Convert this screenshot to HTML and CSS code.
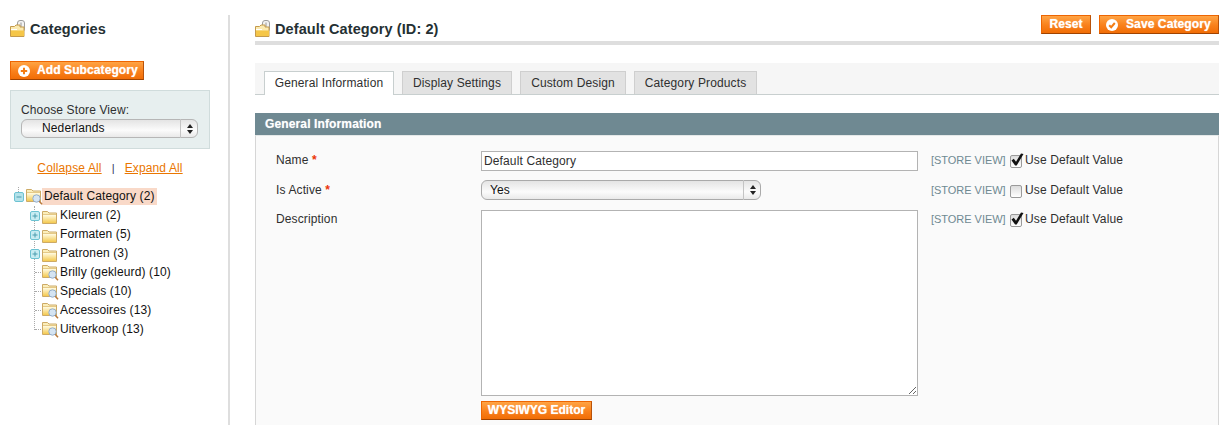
FILE: index.html
```html
<!DOCTYPE html>
<html lang="en">
<head>
<meta charset="utf-8">
<title>Default Category</title>
<link rel="stylesheet" href="styles.css">
</head>
<body>
<svg class="defs" width="0" height="0" aria-hidden="true">
  <defs>
    <linearGradient id="fold" x1="0" y1="0" x2="0" y2="1"><stop offset="0" stop-color="#fffbe2"/><stop offset="1" stop-color="#f4c94f"/></linearGradient>
    <symbol id="folder" viewBox="0 0 15 14">
      <path d="M.5 13.500V1.500h5l1.500 1.500h7.500v10.500z" fill="#fbeeba" stroke="#cdaa66"/>
      <path d="M1 5h13v8H1z" fill="url(#fold)"/>
      <path d="M1 4.500h13" stroke="#e5c987"/>
    </symbol>
    <symbol id="leaf" viewBox="0 0 17 17">
      <path d="M.5 13.500V1.500h5l1.500 1.500h7.500v10.500z" fill="#fbeeba" stroke="#cdaa66"/>
      <path d="M1 5h13v8H1z" fill="url(#fold)"/>
      <path d="M1 4.500h13" stroke="#e5c987"/>
      <circle cx="10.500" cy="10.500" r="3.700" fill="#d5e4f2" stroke="#94aeca"/>
      <path d="M13.300 13.300l2.700 2.900" stroke="#b9793c" stroke-width="1.600"/>
    </symbol>
    <symbol id="head" viewBox="0 0 15 17">
      <rect x="7.500" y=".5" width="7" height="11" rx="2.500" fill="#f2f2f2" stroke="#9c9c9c"/>
      <rect x="10" y="2.500" width="2" height="7" fill="#c4c4c4"/>
      <path d="M.5 16.500V6.500h4l1.500-1.500h4v2h4v9.500z" fill="#fbeab0" stroke="#c49a4c"/>
      <path d="M1 10.500h13V16H1z" fill="#f5c648"/>
      <path d="M1 9.500h6" stroke="#fff"/>
    </symbol>
    <symbol id="plus" viewBox="0 0 10 10">
      <rect x=".5" y=".5" width="9" height="9" rx="1.500" fill="#c8ecf2" stroke="#6cc2d2"/>
      <path d="M2.500 5h5M5 2.500v5" stroke="#4a9cae"/>
    </symbol>
    <symbol id="minus" viewBox="0 0 10 10">
      <rect x=".5" y=".5" width="9" height="9" rx="1.500" fill="#b4e2ea" stroke="#6cc2d2"/>
      <path d="M2.500 5h5" stroke="#4a9cae"/>
    </symbol>
    <symbol id="tick" viewBox="0 0 14 14">
      <path d="M1.500 7.500l2.300-1.700 2.200 3 5-8.300 2.500.5-6.800 11.500h-1.600z" fill="#111"/>
    </symbol>
  </defs>
</svg>
<div class="page">
  <aside class="side">
    <h3 class="side-title"><svg class="ico-head"><use href="#head"/></svg>Categories</h3>
    <button class="btn btn-add" type="button">
      <svg class="btn-ico" viewBox="0 0 12 12"><circle cx="6" cy="6" r="6" fill="#fff"/><path d="M6 2.800v6.400M2.800 6h6.400" stroke="#f47d14" stroke-width="2"/></svg>Add Subcategory
    </button>
    <div class="store-box">
      <label class="store-label" for="store">Choose Store View:</label>
      <div class="sel sel-store">
        <select id="store"><option>Nederlands</option></select>
        <span class="sel-arrows"><i class="up"></i><i class="down"></i></span>
      </div>
    </div>
    <div class="tree-links"><a href="#">Collapse All</a><span class="sep">|</span><a href="#">Expand All</a></div>
    <div class="tree">
      <div class="row root"><svg class="box"><use href="#minus"/></svg><svg class="ic-leaf"><use href="#leaf"/></svg><span class="hl">Default Category (2)</span></div>
      <div class="kids">
        <div class="row"><svg class="box"><use href="#plus"/></svg><svg class="ic-folder"><use href="#folder"/></svg><span>Kleuren (2)</span></div>
        <div class="row"><svg class="box"><use href="#plus"/></svg><svg class="ic-folder"><use href="#folder"/></svg><span>Formaten (5)</span></div>
        <div class="row"><svg class="box"><use href="#plus"/></svg><svg class="ic-folder"><use href="#folder"/></svg><span>Patronen (3)</span></div>
        <div class="row"><i class="dash"></i><svg class="ic-leaf"><use href="#leaf"/></svg><span>Brilly (gekleurd) (10)</span></div>
        <div class="row"><i class="dash"></i><svg class="ic-leaf"><use href="#leaf"/></svg><span>Specials (10)</span></div>
        <div class="row"><i class="dash"></i><svg class="ic-leaf"><use href="#leaf"/></svg><span>Accessoires (13)</span></div>
        <div class="row"><i class="dash"></i><svg class="ic-leaf"><use href="#leaf"/></svg><span>Uitverkoop (13)</span></div>
      </div>
    </div>
  </aside>
  <main class="main">
    <header class="head">
      <h3 class="main-title"><svg class="ico-head"><use href="#head"/></svg>Default Category (ID: 2)</h3>
      <div class="actions">
        <button class="btn btn-reset" type="button">Reset</button>
        <button class="btn btn-save" type="button">
          <svg class="btn-ico" viewBox="0 0 12 12"><circle cx="6" cy="6" r="6" fill="#fff"/><path d="M3.200 6.200l2 2 3.600-4.200" fill="none" stroke="#f47d14" stroke-width="2"/></svg>Save Category
        </button>
      </div>
    </header>
    <nav class="tabs">
      <a class="tab tab-on" href="#">General Information</a>
      <a class="tab tab-2" href="#">Display Settings</a>
      <a class="tab tab-3" href="#">Custom Design</a>
      <a class="tab tab-4" href="#">Category Products</a>
    </nav>
    <h4 class="sec-head">General Information</h4>
    <section class="sec-body">
      <div class="frow">
        <label class="lbl" for="f-name">Name <em>*</em></label>
        <input id="f-name" class="txt" type="text" value="Default Category">
        <div class="scope"><span class="sv">[STORE VIEW]</span><span class="chk"><svg><use href="#tick"/></svg></span><span>Use Default Value</span></div>
      </div>
      <div class="frow">
        <label class="lbl" for="f-act">Is Active <em>*</em></label>
        <div class="sel sel-act">
          <select id="f-act"><option>Yes</option></select>
          <span class="sel-arrows"><i class="up"></i><i class="down"></i></span>
        </div>
        <div class="scope"><span class="sv">[STORE VIEW]</span><span class="chk"></span><span>Use Default Value</span></div>
      </div>
      <div class="frow">
        <label class="lbl" for="f-desc">Description</label>
        <div class="area-wrap">
          <textarea id="f-desc" class="area"></textarea>
          <button class="btn btn-wys" type="button">WYSIWYG Editor</button>
        </div>
        <div class="scope"><span class="sv">[STORE VIEW]</span><span class="chk"><svg><use href="#tick"/></svg></span><span>Use Default Value</span></div>
      </div>
    </section>
  </main>
</div>
</body>
</html>
```
FILE: styles.css
```css
* { box-sizing: border-box; }
html, body { margin: 0; padding: 0; background: #fff; }
body { font: 12px/15px "Liberation Sans", Arial, sans-serif; color: #2f2f2f; letter-spacing: .13px; }
.defs { position: absolute; }
.page { display: flex; height: 425px; overflow: hidden; }

/* buttons */
.btn {
  display: flex; align-items: center; justify-content: center;
  height: 19px; padding: 0; margin: 0;
  font: bold 12px/15px "Liberation Sans", Arial, sans-serif; color: #fff; letter-spacing: .1px;
  background: linear-gradient(#ffa445, #f9801b 55%, #f16d06);
  border: 1px solid #ed6502; border-right-color: #b8520a; border-bottom-color: #a04300;
  text-shadow: 0 0 1px rgba(255,255,255,.8);
}
.btn-ico { width: 12px; height: 12px; flex: none; }

/* sidebar */
.side { width: 230px; flex: none; margin-top: 15px; padding: 0 0 0 10px; border-right: 2px solid #dedede; }
.side-title, .main-title {
  display: flex; align-items: center; margin: 0;
  font: bold 14.5px/18px "Liberation Sans", Arial, sans-serif; letter-spacing: .1px; color: #253033;
}
.side-title { height: 27px; }
.ico-head { width: 15px; height: 17px; margin-right: 5px; flex: none; }
.btn-add { width: 134px; margin-top: 19px; justify-content: flex-start; padding-left: 7px; }
.btn-add .btn-ico { margin-right: 7px; }
.store-box { width: 200px; height: 59px; margin-top: 10px; padding: 11px 10px 0; background: #e7efef; border: 1px solid #d0dcdc; }
.store-label { display: block; height: 17px; font-size: 12px; line-height: 17px; color: #2f2f2f; }
.sel { position: relative; height: 20px; }
.sel select {
  appearance: none; display: block; width: 100%; height: 100%; margin: 0; letter-spacing: .13px;
  border: 1px solid #b6b6b6; border-radius: 6px; color: #111;
  background: linear-gradient(#e4e4e4, #fbfbfb 60%, #e9e9e9);
  font: 12px/16px "Liberation Sans", Arial, sans-serif;
}
.sel-store { width: 177px; height: 19px; }
.sel-store select { padding: 0 0 2px 20px; }
.sel-act { width: 280px; }
.sel-act select { padding-left: 8px; border-color: #aaa; }
.sel-arrows {
  position: absolute; right: 0; top: 0; bottom: 0; width: 18px; pointer-events: none;
  display: flex; flex-direction: column; align-items: center; justify-content: center; gap: 2px;
  border-left: 1px solid #c4c4c4;
}
.sel-arrows i { width: 0; height: 0; border-left: 3px solid transparent; border-right: 3px solid transparent; }
.sel-arrows .up { border-bottom: 4px solid #222; }
.sel-arrows .down { border-top: 4px solid #222; }

.tree-links { display: flex; justify-content: center; width: 200px; margin-top: 11px; height: 16px; line-height: 16px; }
.tree-links a { color: #ea7601; text-decoration: underline; }
.sep { margin: 0 10px; color: #2f2f5f; font-size: 11px; }

.tree { margin-top: 11px; color: #111; position: relative; }
.tree::before { content: ""; position: absolute; left: 8px; top: 0; height: 5px; border-left: 1px dotted #aaa; }
.row { display: flex; align-items: center; height: 19px; }
.root { padding-left: 4px; }
.root .ic-leaf { margin-left: 2px; margin-right: -1px; }
.hl { background: #f9d9c8; height: 17px; line-height: 16px; padding: 0 2px; }
.box { width: 10px; height: 10px; flex: none; position: relative; }
.ic-folder { width: 15px; height: 14px; margin: 0 3px 0 2px; flex: none; position: relative; top: 1px; }
.ic-leaf { width: 17px; height: 17px; margin-right: 1px; flex: none; position: relative; }
.kids { position: relative; padding-left: 20px; }
.kids::before { content: ""; position: absolute; left: 24px; top: 0; height: 124px; border-left: 1px dotted #aaa; }
.dash { width: 12px; height: 0; flex: none; border-top: 1px dotted #aaa; position: relative; left: 5px; }

/* main */
.main { flex: 1; min-width: 0; padding: 15px 3px 0 25px; }
.head { display: flex; justify-content: space-between; align-items: flex-start; height: 30px; border-bottom: 4px solid #dedede; }
.main-title { height: 27px; }
.actions { display: flex; gap: 8px; }
.btn-reset { width: 50px; }
.btn-save { width: 120px; justify-content: flex-start; padding-left: 6px; }
.btn-save .btn-ico { margin-right: 8px; }

.tabs { display: flex; margin-top: 18px; height: 32px; padding: 8px 0 0 9px; background: #f6f6f6; border-bottom: 1px solid #c8cfcf; gap: 8px; }
.tab {
  display: block; height: 23px; line-height: 22px; text-align: center; color: #2f2f2f; text-decoration: none;
  background: #e2e2e2; border: 1px solid #cfcfcf; border-bottom: 0;
}
.tab-on { width: 130px; height: 24px; background: #fff; border-color: #c8cfcf; }
.tab-2 { width: 110px; }
.tab-3 { width: 106px; }
.tab-4 { width: 123px; }

.sec-head { margin: 18px 0 0; height: 22px; padding: 1px 0 0 10px; background: #6f8992; color: #fff; font: bold 12px/21px "Liberation Sans", Arial, sans-serif; text-shadow: 0 0 1px rgba(255,255,255,.5); }
.sec-body { height: 300px; padding: 15px 0 0 20px; background: #fafafa; border: 1px solid #d6d6d6; border-top-color: #e4e8e8; }
.frow { display: grid; grid-template-columns: 205px 437px auto; margin-bottom: 9px; }
.frow:nth-child(2) { margin-bottom: 10px; }
.lbl { padding-top: 1px; line-height: 16px; }
.frow:nth-child(2) .lbl { padding-top: 2px; }
.frow:nth-child(2) .scope { margin-top: 1px; }
.lbl em { color: #eb340a; font-style: normal; font-weight: bold; }
.txt { width: 437px; height: 20px; margin: 0; padding: 1px 2px; border: 1px solid #b3b3b3; background: #fff; color: #2f2f2f; letter-spacing: .13px; font: 12px/16px "Liberation Sans", Arial, sans-serif; }
.area-wrap { display: flex; flex-direction: column; align-items: flex-start; gap: 5px; }
.area { display: block; width: 437px; height: 186px; margin: 0; border: 1px solid #b3b3b3; background: #fff; font: 12px/16px "Liberation Sans", Arial, sans-serif; }
.btn-wys { width: 111px; letter-spacing: 0; }
.scope { display: flex; align-items: center; height: 18px; padding-left: 13px; color: #2f2f2f; white-space: nowrap; }
.sv { width: 79px; font-size: 11px; letter-spacing: -.03px; color: #6f8992; flex: none; }
.chk {
  width: 12px; height: 13px; flex: none; margin-right: 3px; position: relative; top: 1px;
  border: 1px solid #9a9a9a; border-radius: 2px; background: linear-gradient(#dcdcdc, #fff);
}
.chk svg { position: absolute; left: -1px; top: -3px; width: 14px; height: 14px; }
```
